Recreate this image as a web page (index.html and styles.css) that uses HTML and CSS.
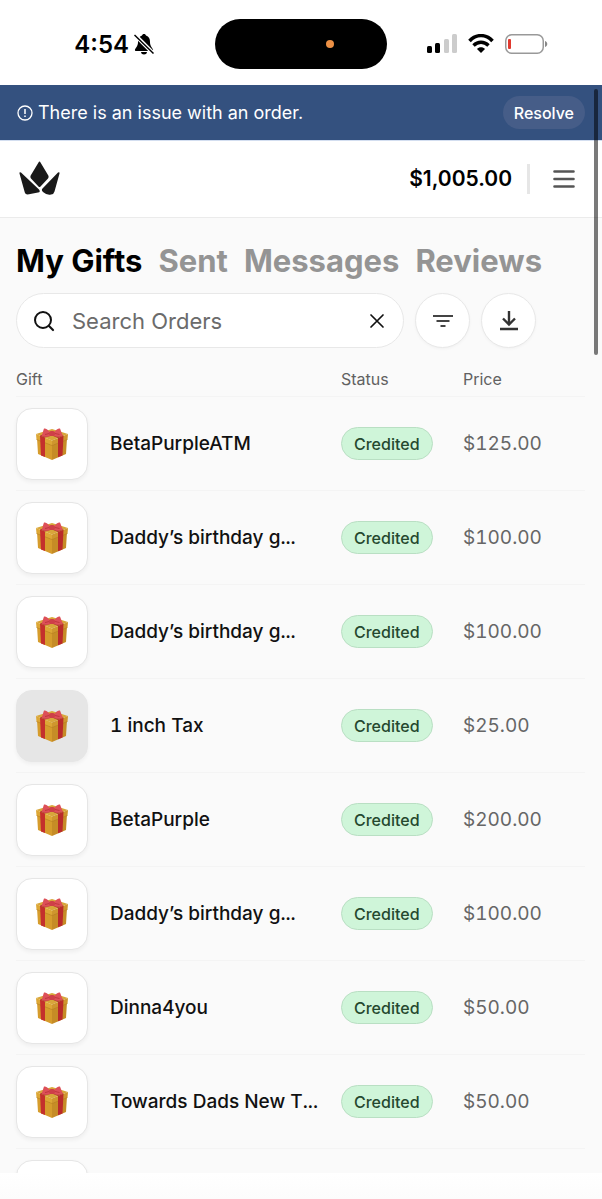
FILE: index.html
```
<!DOCTYPE html>
<html lang="en">
<head>
    <meta charset="UTF-8">
    <meta name="viewport" content="width=device-width, initial-scale=1.0">
    <title>My Gifts</title>
    <link rel="stylesheet" href="styles.css">
</head>
<body>
    <!-- Shared gift icon -->
    <svg class="sprite" aria-hidden="true">
        <symbol id="gift" viewBox="0 0 36 36">
            <path d="M3 12L18 19V34L4 28Z" fill="#d69c2c"/>
            <path d="M33 12L18 19V34L32 28Z" fill="#c68c26"/>
            <path d="M2 8L18 3L34 8L18 14.500Z" fill="#d8a63a"/>
            <path d="M2 8L18 14.500V19.500L2.500 13.500Z" fill="#dda735"/>
            <path d="M34 8L18 14.500V19.500L33.500 13.500Z" fill="#cf962e"/>
            <path d="M2.500 13.500L18 19.500L33.500 13.500" fill="none" stroke="#b67c20" stroke-width=".6"/>
            <path d="M6 9.600L11 11.600V31L7 29.400Z" fill="#c4302c"/>
            <path d="M24 12L29.500 9.800L28.500 29.500L24 31.300Z" fill="#ba2b2b"/>
            <path d="M6 9.600L14 7H22L29.500 9.800L24 12L18 9.500L11 11.600Z" fill="#a8392a"/>
            <path d="M16 6.500C14 3.500 11.500 2 10 2.500C9 5 9 7 7.500 9.500C10 11.500 14 11 17 9.500Z" fill="#dd5058"/>
            <path d="M20 6.500C22 3.500 24.500 2 26 2.500C27 5 27.500 7 29 9.500C26 11.500 22 11 19 9.500Z" fill="#dd5058"/>
            <path d="M11 8.500L15.500 7.500M25.500 8.500L21 7.500" fill="none" stroke="#bf363d" stroke-width="1"/>
            <rect x="15" y="5" width="6" height="5" rx="2" fill="#ce3f48"/>
        </symbol>
    </svg>

    <div class="page">
        <div class="status-bar">
            <div class="clock">
                <span>4:54</span>
                <svg width="20" height="22" viewBox="0 0 20 22" aria-hidden="true">
                    <path d="M10 1C8.900 1 8.200 1.600 8 2.500C5 3.300 4 6 4 9C4 13 2 14.500 1 16.500C.7 17.400 1.200 18 2 18H18C18.800 18 19.300 17.400 19 16.500C18 14.500 16 13 16 9C16 6 15 3.300 12 2.500C11.800 1.600 11.100 1 10 1Z"/>
                    <path d="M7 19H13C12.700 20.800 11.500 21.500 10 21.500S7.300 20.800 7 19Z"/>
                    <path d="M0 1L20 21" stroke="#fff" stroke-width="4"/>
                    <path d="M.5 2L19.500 20.500" stroke="#000" stroke-width="1.500"/>
                </svg>
            </div>
            <div class="island"><span class="mic-dot"></span></div>
            <div class="signals">
                <svg width="30" height="20" viewBox="0 0 30 20" aria-hidden="true">
                    <rect x="0" y="12" width="5" height="7" rx="1.500"/>
                    <rect x="8" y="9" width="5" height="10" rx="1.500"/>
                    <rect x="17" y="5" width="5" height="14" rx="1.500" fill="#ccc"/>
                    <rect x="25" y="0" width="5" height="19" rx="1.500" fill="#ccc"/>
                </svg>
                <svg width="26" height="20" viewBox="0 0 26 20" aria-hidden="true">
                    <path d="M1.500 7C8 -.2 18 -.2 24.500 7" fill="none" stroke="#000" stroke-width="3.500"/>
                    <path d="M5.500 11.500C10 7.300 16 7.300 20.500 11.500" fill="none" stroke="#000" stroke-width="3.500"/>
                    <path d="M9 15C11 12.800 15 12.800 17 15L13 19Z"/>
                </svg>
                <svg width="43" height="20" viewBox="0 0 43 20" aria-hidden="true">
                    <rect x=".75" y=".75" width="37.500" height="18.500" rx="6" fill="#fff" stroke="#999" stroke-width="1.500"/>
                    <rect x="3" y="5" width="3" height="10" rx="1" fill="#e0392f"/>
                    <path d="M40 7C43 8 43 12 40 13Z" fill="#888"/>
                </svg>
            </div>
        </div>

        <div class="notice">
            <svg width="16" height="16" viewBox="0 0 16 16" aria-hidden="true">
                <circle cx="8" cy="8" r="7" fill="none" stroke="currentColor" stroke-width="1.300"/>
                <path d="M8 4V9M8 10.500V12" stroke="currentColor" stroke-width="1.500"/>
            </svg>
            <span class="notice-text">There is an issue with an order.</span>
            <button type="button" class="resolve">Resolve</button>
        </div>

        <header class="header">
            <a href="#" class="logo" aria-label="Home">
                <svg width="42" height="36" viewBox="0 0 42 36" fill="#191919">
                    <path d="M19.500 1.500Q20.500 -.5 21.500 1.500L29.300 14.500Q30 16 29 17.500L21.500 25.500Q20.500 26.500 19.500 25.500L12 17.500Q11 16 11.700 14.500Z"/>
                    <path d="M.5 12.500Q.2 10.500 2 11.500L20 28.500Q22 31 19 31.500L10 33.300Q6.500 34 5.800 31.500Z"/>
                    <path d="M40.500 12.500Q40.800 10.500 39 11.500L23.500 27.500Q22 29 24 31Q28 34.500 32 33.500Q35 33 35.500 30.500Z"/>
                </svg>
            </a>
            <span class="balance">$1,005.00</span>
            <button type="button" class="menu" aria-label="Menu">
                <svg width="22" height="20" viewBox="0 0 22 20">
                    <path d="M1.500 2.500H20.500M1.500 10H20.500M1.500 17.500H20.500" stroke="#555" stroke-width="2.600" stroke-linecap="round"/>
                </svg>
            </button>
        </header>

        <main class="content">
            <nav class="tabs">
                <a href="#" class="tab active">My Gifts</a>
                <a href="#" class="tab">Sent</a>
                <a href="#" class="tab">Messages</a>
                <a href="#" class="tab">Reviews</a>
            </nav>

            <div class="toolbar">
                <div class="search">
                    <svg width="22" height="22" viewBox="0 0 22 22" aria-hidden="true">
                        <circle cx="10" cy="10" r="8" fill="none" stroke="#111" stroke-width="2"/>
                        <path d="M16 16L20 20" stroke="#111" stroke-width="2.200" stroke-linecap="round"/>
                    </svg>
                    <input type="text" placeholder="Search Orders" aria-label="Search Orders">
                    <button type="button" class="clear" aria-label="Clear search">
                        <svg width="16" height="16" viewBox="0 0 16 16">
                            <path d="M2 2L14 14M14 2L2 14" stroke="#111" stroke-width="1.700" stroke-linecap="round"/>
                        </svg>
                    </button>
                </div>
                <button type="button" class="round" aria-label="Filter">
                    <svg width="22" height="16" viewBox="0 0 22 16">
                        <path d="M1 3H21M4.500 8H17.500M8.500 13H13.500" stroke="#444" stroke-width="2"/>
                    </svg>
                </button>
                <button type="button" class="round" aria-label="Download">
                    <svg width="20" height="20" viewBox="0 0 20 20">
                        <path d="M10 0V13M4 7.500L10 13.500L16 7.500M1 18H19" fill="none" stroke="#333" stroke-width="2.400"/>
                    </svg>
                </button>
            </div>

            <table class="orders">
                <thead>
                    <tr>
                        <th>Gift</th>
                        <th class="col-status">Status</th>
                        <th class="col-price">Price</th>
                    </tr>
                </thead>
                <tbody>
                    <tr>
                        <td><div class="gift"><span class="thumb"><svg><use href="#gift"/></svg></span>BetaPurpleATM</div></td>
                        <td><span class="badge">Credited</span></td>
                        <td class="price">$125.00</td>
                    </tr>
                    <tr>
                        <td><div class="gift"><span class="thumb"><svg><use href="#gift"/></svg></span>Daddy’s birthday g...</div></td>
                        <td><span class="badge">Credited</span></td>
                        <td class="price">$100.00</td>
                    </tr>
                    <tr>
                        <td><div class="gift"><span class="thumb"><svg><use href="#gift"/></svg></span>Daddy’s birthday g...</div></td>
                        <td><span class="badge">Credited</span></td>
                        <td class="price">$100.00</td>
                    </tr>
                    <tr>
                        <td><div class="gift"><span class="thumb pressed"><svg><use href="#gift"/></svg></span>1 inch Tax</div></td>
                        <td><span class="badge">Credited</span></td>
                        <td class="price">$25.00</td>
                    </tr>
                    <tr>
                        <td><div class="gift"><span class="thumb"><svg><use href="#gift"/></svg></span>BetaPurple</div></td>
                        <td><span class="badge">Credited</span></td>
                        <td class="price">$200.00</td>
                    </tr>
                    <tr>
                        <td><div class="gift"><span class="thumb"><svg><use href="#gift"/></svg></span>Daddy’s birthday g...</div></td>
                        <td><span class="badge">Credited</span></td>
                        <td class="price">$100.00</td>
                    </tr>
                    <tr>
                        <td><div class="gift"><span class="thumb"><svg><use href="#gift"/></svg></span>Dinna4you</div></td>
                        <td><span class="badge">Credited</span></td>
                        <td class="price">$50.00</td>
                    </tr>
                    <tr>
                        <td><div class="gift"><span class="thumb"><svg><use href="#gift"/></svg></span>Towards Dads New T...</div></td>
                        <td><span class="badge">Credited</span></td>
                        <td class="price">$50.00</td>
                    </tr>
                    <tr>
                        <td><div class="gift"><span class="thumb"></span></div></td>
                        <td></td>
                        <td></td>
                    </tr>
                </tbody>
            </table>
        </main>

        <div class="bottom-bar"></div>
        <div class="scrollbar"></div>
    </div>
</body>
</html>
```
FILE: styles.css
```
* { box-sizing: border-box; }
body { margin: 0; font-family: Inter, "Liberation Sans", sans-serif; background: #fff; color: #111; }
button { font-family: inherit; border: none; padding: 0; cursor: pointer; }
a { color: inherit; text-decoration: none; }
svg { display: block; flex: none; }
.sprite { position: absolute; width: 0; height: 0; }
.page { position: relative; display: flex; flex-direction: column; height: 100vh; overflow: hidden; }

/* Phone status bar */
.status-bar { flex: none; display: grid; grid-template-columns: 1fr 172px 1fr; align-items: center; height: 85px; padding-top: 3px; color: #000; }
.clock { display: flex; align-items: center; justify-content: flex-end; gap: 5px; padding-right: 61px; font-size: 24px; font-weight: 600; }
.island { display: flex; align-items: center; justify-content: flex-end; height: 50px; padding-right: 53px; border-radius: 25px; background: #000; }
.mic-dot { width: 8px; height: 8px; border-radius: 50%; background: #ec9045; }
.signals { display: flex; align-items: center; gap: 11px; padding-left: 40px; }

.notice { flex: none; display: flex; align-items: center; gap: 5px; height: 56px; padding: 0 17px; background: #34517f; border-bottom: 1px solid #d3def0; color: #fff; font-size: 18px; }
.notice-text { flex: 1; }
.resolve { height: 33px; padding: 0 11px; border-radius: 17px; background: #465d88; color: #fff; font-size: 16px; font-weight: 500; }

.header { flex: none; display: flex; align-items: center; height: 77px; padding: 0 27px 0 19px; border-bottom: 1px solid #ebebeb; }
.logo { margin-right: auto; }
.balance { padding-right: 15px; font-size: 21px; font-weight: 600; line-height: 30px; border-right: 3px solid #e6e6e6; color: #000; }
.menu { margin-left: 23px; background: none; }

.content { flex: 1; min-height: 0; overflow: hidden; padding: 20px 17px 0 16px; background: #fafafa; }
.tabs { display: flex; gap: 16px; font-size: 31px; font-weight: 700; line-height: 46px; white-space: nowrap; }
.tab { color: #949494; }
.tab.active { color: #000; }

.toolbar { display: flex; gap: 11px; margin-top: 9px; padding-right: 49px; }
.search { flex: 1; min-width: 0; display: flex; align-items: center; height: 55px; padding: 0 18px 0 16px; border: 1px solid #e8e8e8; border-radius: 28px; background: #fff; }
.search input { flex: 1; min-width: 0; margin-left: 17px; padding: 0; border: none; outline: none; background: none; font-family: inherit; font-size: 22px; }
.search input::placeholder { color: #6b6b6b; opacity: 1; }
.clear { background: none; }
.round { flex: none; display: flex; align-items: center; justify-content: center; width: 55px; height: 55px; border: 1px solid #e8e8e8; border-radius: 50%; background: #fff; box-shadow: 0 1px 3px rgba(0, 0, 0, 0.04); }

.orders { width: 100%; border-collapse: collapse; table-layout: fixed; font-variant-numeric: tabular-nums; }
.orders th { height: 48px; padding: 15px 0 0; border-bottom: 1px solid #f4f4f4; color: #616161; font-size: 16px; font-weight: 400; text-align: left; }
.orders td { height: 94px; padding: 1px 0 0; border-bottom: 1px solid #f4f4f4; }
.col-status { width: 122px; }
.col-price { width: 122px; }
.gift { display: flex; align-items: center; gap: 22px; font-size: 19px; font-weight: 500; white-space: nowrap; }
.thumb { flex: none; display: flex; align-items: center; justify-content: center; width: 72px; height: 72px; border: 1px solid #e6e6e6; border-radius: 16px; background: #fff; box-shadow: 0 2px 4px rgba(0, 0, 0, 0.05); }
.thumb svg { width: 36px; height: 36px; }
.thumb.pressed { background: #e6e6e6; }
.badge { display: inline-flex; align-items: center; height: 33px; padding: 0 12px; border: 1px solid #b9dfc3; border-radius: 17px; background: #cff5d9; color: #25482f; font-size: 16px; font-weight: 500; }
.orders .price { color: #666; font-size: 19px; }

.bottom-bar { flex: none; height: 26px; background: linear-gradient(#fff, #fcfcfc); }
.scrollbar { position: absolute; top: 89px; right: 4px; width: 4px; height: 266px; border-radius: 2px; background: rgba(0, 0, 0, 0.52); }
```
